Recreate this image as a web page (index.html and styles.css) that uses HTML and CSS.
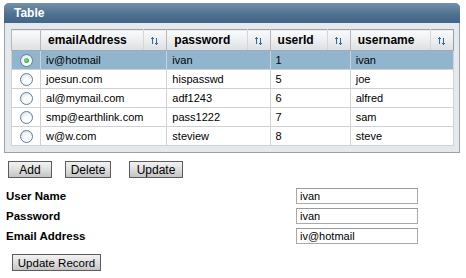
FILE: index.html
```html
<!DOCTYPE html>
<html lang="en">
<head>
  <meta charset="UTF-8">
  <title>Table</title>
  <link rel="stylesheet" href="styles.css">
</head>
<body>
  <div class="panel">
    <div class="panel-title">Table</div>
    <div class="panel-body">
      <table class="grid">
        <colgroup>
          <col class="c-sel">
          <col class="c-email"><col class="c-sort">
          <col class="c-pass"><col class="c-sort">
          <col class="c-id"><col class="c-sort">
          <col class="c-name"><col class="c-sort">
        </colgroup>
        <thead>
          <tr>
            <th></th>
            <th>emailAddress</th>
            <th class="sort"><svg width="8" height="8" viewBox="0 0 8 8"><path d="M1 0h1v1h-1zM0 1h3v1h-3zM1 2h1v5h-1zM5 1h1v5h-1zM4 6h3v1h-3zM5 7h1v1h-1z"/></svg></th>
            <th>password</th>
            <th class="sort"><svg width="8" height="8" viewBox="0 0 8 8"><path d="M1 0h1v1h-1zM0 1h3v1h-3zM1 2h1v5h-1zM5 1h1v5h-1zM4 6h3v1h-3zM5 7h1v1h-1z"/></svg></th>
            <th>userId</th>
            <th class="sort"><svg width="8" height="8" viewBox="0 0 8 8"><path d="M1 0h1v1h-1zM0 1h3v1h-3zM1 2h1v5h-1zM5 1h1v5h-1zM4 6h3v1h-3zM5 7h1v1h-1z"/></svg></th>
            <th>username</th>
            <th class="sort"><svg width="8" height="8" viewBox="0 0 8 8"><path d="M1 0h1v1h-1zM0 1h3v1h-3zM1 2h1v5h-1zM5 1h1v5h-1zM4 6h3v1h-3zM5 7h1v1h-1z"/></svg></th>
          </tr>
        </thead>
        <tbody>
          <tr class="selected">
            <td class="sel"><span class="radio checked"></span></td>
            <td colspan="2">iv@hotmail</td>
            <td colspan="2">ivan</td>
            <td colspan="2">1</td>
            <td colspan="2">ivan</td>
          </tr>
          <tr>
            <td class="sel"><span class="radio"></span></td>
            <td colspan="2">joesun.com</td>
            <td colspan="2">hispasswd</td>
            <td colspan="2">5</td>
            <td colspan="2">joe</td>
          </tr>
          <tr>
            <td class="sel"><span class="radio"></span></td>
            <td colspan="2">al@mymail.com</td>
            <td colspan="2">adf1243</td>
            <td colspan="2">6</td>
            <td colspan="2">alfred</td>
          </tr>
          <tr>
            <td class="sel"><span class="radio"></span></td>
            <td colspan="2">smp@earthlink.com</td>
            <td colspan="2">pass1222</td>
            <td colspan="2">7</td>
            <td colspan="2">sam</td>
          </tr>
          <tr>
            <td class="sel"><span class="radio"></span></td>
            <td colspan="2">w@w.com</td>
            <td colspan="2">steview</td>
            <td colspan="2">8</td>
            <td colspan="2">steve</td>
          </tr>
        </tbody>
      </table>
    </div>
  </div>

  <div class="actions">
    <button class="btn btn-add">Add</button>
    <button class="btn btn-delete">Delete</button>
    <button class="btn btn-update">Update</button>
  </div>

  <div class="record-form">
    <label>User Name</label>
    <input type="text" value="ivan">
    <label>Password</label>
    <input type="text" value="ivan">
    <label>Email Address</label>
    <input type="text" value="iv@hotmail">
  </div>

  <div class="form-actions">
    <button class="btn btn-record">Update Record</button>
  </div>
</body>
</html>
```

FILE: styles.css
```css
* {
  box-sizing: border-box;
}

body {
  margin: 0;
  background: #fff;
  font-family: 'Liberation Sans', Arial, sans-serif;
  font-size: 11px;
  color: #000;
}

/* panel */
.panel {
  width: 456px;
  margin: 3px 0 0 4px;
  border: 1px solid #9aa2aa;
  border-top: none;
  border-radius: 5px 5px 0 0;
  background: #e6e9ec;
}

.panel-title {
  height: 20px;
  margin: 0 -1px;
  padding: 3px 0 0 10px;
  border-radius: 5px 5px 0 0;
  background: linear-gradient(#7290ab, #4c6f8e 60%, #42668a);
  color: #fff;
  font-weight: bold;
  font-size: 12px;
}

.panel-body {
  padding: 6px 5px 6px 6px;
}

/* grid */
.grid {
  width: 443px;
  table-layout: fixed;
  border-collapse: collapse;
  border: 1px solid #98a1aa;
  background: #fff;
}

.c-sel { width: 29px; }
.c-email { width: 103px; }
.c-pass { width: 80px; }
.c-id { width: 57px; }
.c-name { width: 80px; }
.c-sort { width: 23px; }

.grid th {
  height: 21px;
  padding: 0 0 0 7px;
  background: linear-gradient(#fafafb, #eceef0 50%, #dcdfe3);
  border-left: 1px solid #b3b9bf;
  border-bottom: 1px solid #a2aab2;
  text-align: left;
  font-size: 12px;
  font-weight: bold;
  white-space: nowrap;
}

.grid th.sort {
  padding: 2px 0 0 0;
  text-align: center;
  border-left-color: #d3d7db;
}

.grid th.sort svg {
  fill: #2f6aa6;
}

.grid td {
  height: 18px;
  padding: 0 0 0 5px;
  border: 1px solid #cdd2d7;
  white-space: nowrap;
  overflow: hidden;
}

.grid td.sel {
  padding: 0;
  text-align: center;
}

.grid tr.selected td {
  background: #91b5cd;
}

.radio {
  display: inline-block;
  width: 13px;
  height: 13px;
  margin-top: 3px;
  border: 1px solid #5f7f9e;
  border-radius: 50%;
  background: radial-gradient(circle at 60% 65%, #fff 30%, #dde3ea 80%);
  position: relative;
}

.radio.checked:after {
  content: "";
  position: absolute;
  left: 3px;
  top: 3px;
  width: 5px;
  height: 5px;
  border-radius: 50%;
  background: radial-gradient(circle at 40% 40%, #7ee07e, #1e9a2a);
}

/* buttons */
.btn {
  height: 17px;
  padding: 0;
  border: 1px solid #5c5c5c;
  background: linear-gradient(#f2f2f2, #dcdcdc 55%, #c4c4c4);
  font-family: 'Liberation Sans', Arial, sans-serif;
  font-size: 12px;
  color: #000;
  line-height: 14px;
}

.actions {
  display: flex;
  margin: 8px 0 0 8px;
}

.btn-add { width: 44px; }
.btn-delete { width: 46px; margin-left: 13px; }
.btn-update { width: 54px; margin-left: 18px; }

/* record form */
.record-form {
  display: grid;
  grid-template-columns: 290px 122px;
  grid-auto-rows: 16px;
  row-gap: 4px;
  margin: 10px 0 0 6px;
  align-items: center;
}

.record-form label {
  font-weight: bold;
  font-size: 11.5px;
}

.record-form input {
  width: 122px;
  height: 16px;
  padding: 0 0 0 3px;
  border: 1px solid #a9a9a9;
  border-top-color: #9a9a9a;
  font-family: 'Liberation Sans', Arial, sans-serif;
  font-size: 11px;
  color: #000;
}

.form-actions {
  margin: 10px 0 0 12px;
}

.btn-record {
  width: 89px;
  font-size: 11.5px;
}
```
